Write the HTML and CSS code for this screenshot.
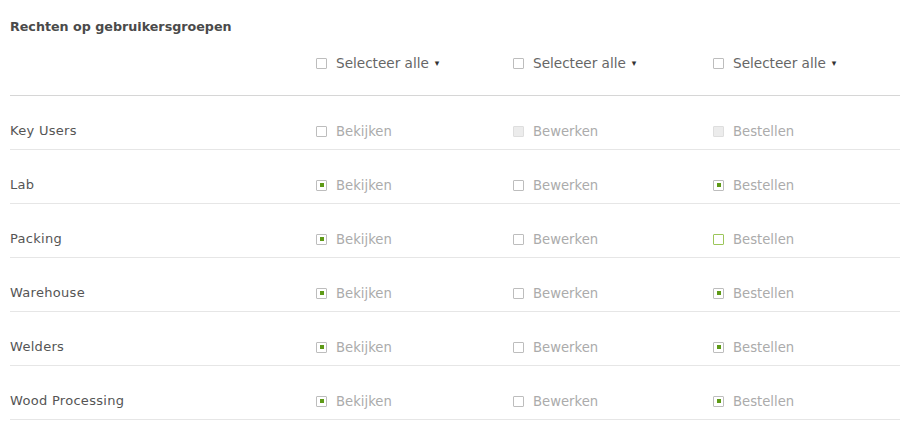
FILE: index.html
```html
<!DOCTYPE html>
<html lang="nl">
<head>
<meta charset="utf-8">
<title>Rechten op gebruikersgroepen</title>
<link rel="stylesheet" href="styles.css">
</head>
<body>
<div class="page">
  <h2 class="title">Rechten op gebruikersgroepen</h2>
  <div class="grid head">
    <div class="name"></div>
    <div class="cell"><span class="cb"></span><span class="sel">Selecteer alle</span><span class="caret">▾</span></div>
    <div class="cell"><span class="cb"></span><span class="sel">Selecteer alle</span><span class="caret">▾</span></div>
    <div class="cell"><span class="cb"></span><span class="sel">Selecteer alle</span><span class="caret">▾</span></div>
  </div>
  <div class="grid row">
    <div class="name">Key Users</div>
    <div class="cell"><span class="cb"></span><span class="lbl">Bekijken</span></div>
    <div class="cell"><span class="cb disabled"></span><span class="lbl">Bewerken</span></div>
    <div class="cell"><span class="cb disabled"></span><span class="lbl">Bestellen</span></div>
  </div>
  <div class="grid row">
    <div class="name">Lab</div>
    <div class="cell"><span class="cb checked"></span><span class="lbl">Bekijken</span></div>
    <div class="cell"><span class="cb"></span><span class="lbl">Bewerken</span></div>
    <div class="cell"><span class="cb checked"></span><span class="lbl">Bestellen</span></div>
  </div>
  <div class="grid row">
    <div class="name">Packing</div>
    <div class="cell"><span class="cb checked"></span><span class="lbl">Bekijken</span></div>
    <div class="cell"><span class="cb"></span><span class="lbl">Bewerken</span></div>
    <div class="cell"><span class="cb focus"></span><span class="lbl">Bestellen</span></div>
  </div>
  <div class="grid row">
    <div class="name">Warehouse</div>
    <div class="cell"><span class="cb checked"></span><span class="lbl">Bekijken</span></div>
    <div class="cell"><span class="cb"></span><span class="lbl">Bewerken</span></div>
    <div class="cell"><span class="cb checked"></span><span class="lbl">Bestellen</span></div>
  </div>
  <div class="grid row">
    <div class="name">Welders</div>
    <div class="cell"><span class="cb checked"></span><span class="lbl">Bekijken</span></div>
    <div class="cell"><span class="cb"></span><span class="lbl">Bewerken</span></div>
    <div class="cell"><span class="cb checked"></span><span class="lbl">Bestellen</span></div>
  </div>
  <div class="grid row">
    <div class="name">Wood Processing</div>
    <div class="cell"><span class="cb checked"></span><span class="lbl">Bekijken</span></div>
    <div class="cell"><span class="cb"></span><span class="lbl">Bewerken</span></div>
    <div class="cell"><span class="cb checked"></span><span class="lbl">Bestellen</span></div>
  </div>
</div>
</body>
</html>
```
FILE: styles.css
```css
html, body {
  margin: 0;
  padding: 0;
  background: #fff;
}
.page {
  padding: 18px 0 0 10px;
  font-family: "DejaVu Sans", "Open Sans", sans-serif;
}
.title {
  margin: 0;
  font-size: 12.7px;
  line-height: 18px;
  font-weight: 700;
  color: #4a4a4a;
}
.grid {
  display: grid;
  grid-template-columns: 306px 197px 200px 1fr;
  align-items: center;
}
.head {
  padding: 19px 0 24px;
  border-bottom: 1.5px solid #d6d6d6;
}
.row {
  height: 54px;
  padding-top: 27px;
  box-sizing: border-box;
  align-items: start;
  border-bottom: 1.5px solid #e6e6e6;
}
.name {
  font-size: 13px;
  line-height: 16px;
  color: #555;
  letter-spacing: 0.3px;
}
.cell {
  display: flex;
  align-items: center;
  height: 16px;
}
.cb {
  width: 11px;
  height: 11px;
  box-sizing: border-box;
  border: 1px solid #bdbdbd;
  border-radius: 1px;
  background: #fff;
  margin-right: 9px;
  display: flex;
  align-items: center;
  justify-content: center;
}
.cb.disabled {
  background: #ececec;
  border-color: #dedede;
}
.cb.checked::after {
  content: "";
  width: 4px;
  height: 4px;
  background: #5e9a17;
}
.cb.focus {
  border-color: #9cc65a;
}
.sel {
  font-size: 13.6px;
  color: #666;
}
.caret {
  font-size: 9px;
  color: #333;
  margin-left: 6px;
}
.lbl {
  font-size: 13.2px;
  color: #ababab;
}
```
